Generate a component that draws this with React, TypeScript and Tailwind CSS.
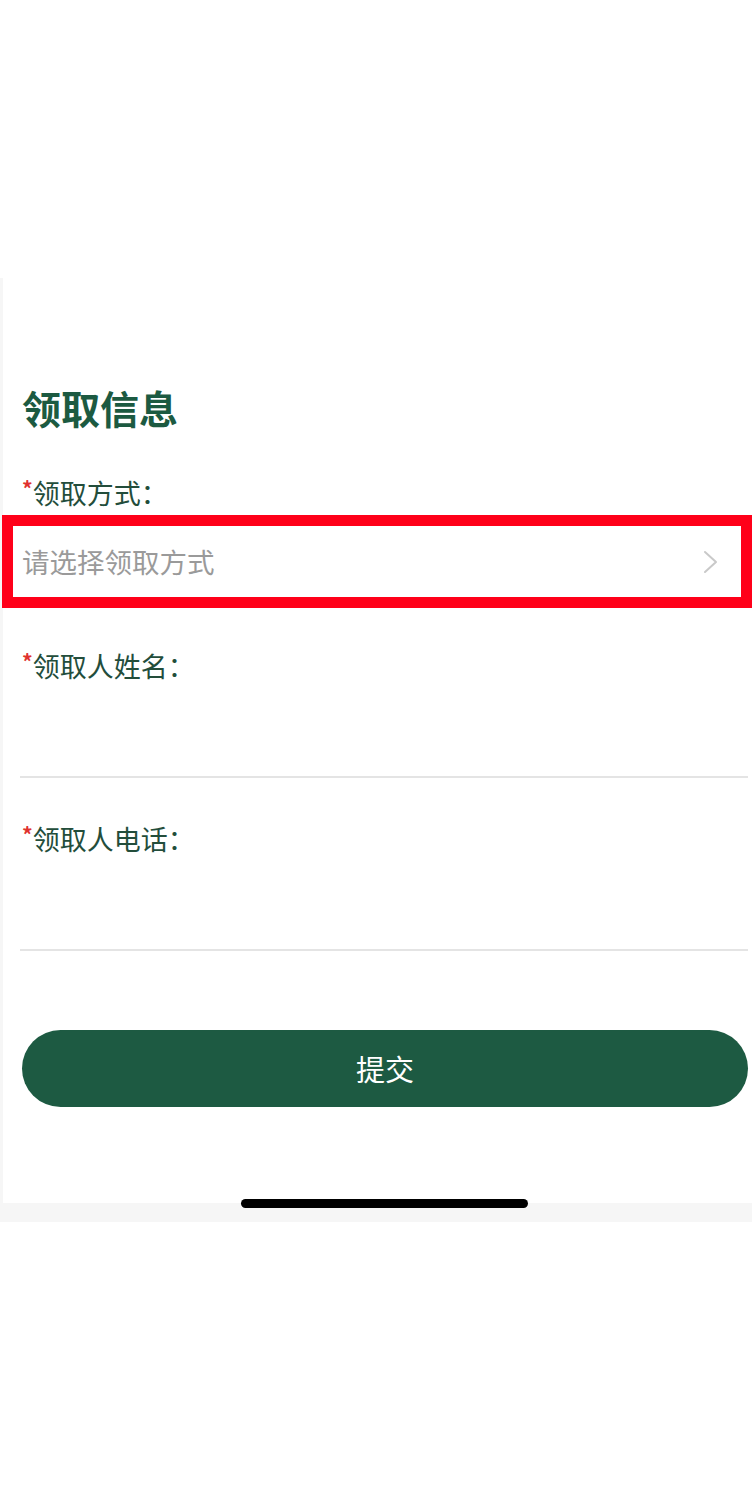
import React from "react";

const font = { fontFamily: '"Noto Sans CJK SC", "Noto Sans", sans-serif' };

function Label({ text }: { text: string }) {
  return (
    <div className="h-[40px] flex items-center pl-[22px] text-[27px] leading-none text-[#234d3b]">
      <span className="text-[#e0322f] text-[21px] font-bold self-start mt-[6px]">*</span>
      <span>{text}</span>
    </div>
  );
}

export default function App() {
  return (
    <div className="relative w-[752px] min-h-[1504px] bg-white" style={font}>
      <div className="h-[278px]" />
      <div className="h-[925px] flex flex-col border-l-[3px] border-[#f6f6f6] bg-white">
        <div className="h-[60px] mt-[99px] flex items-center pl-[19px] text-[39px] font-bold leading-none text-[#1c5a41]">
          领取信息
        </div>
        <div className="mt-[35px] -ml-[3px]">
          <Label text="领取方式：" />
        </div>
        <div className="mt-[3px] -ml-[1px] h-[93px] border-[11px] border-[#ff0019] flex items-center justify-between pl-[9px] pr-[22px]">
          <span className="text-[27.5px] leading-none text-[#9a9a9a]">请选择领取方式</span>
          <svg width="16" height="24" viewBox="0 0 16 24" fill="none">
            <path d="M2 2 L13 12 L2 22" stroke="#c9c9c9" strokeWidth="2" strokeLinecap="round" strokeLinejoin="round" />
          </svg>
        </div>
        <div className="mt-[37px] -ml-[3px]">
          <Label text="领取人姓名：" />
        </div>
        <div className="h-[93px] ml-[17px] mr-[4px] border-b-2 border-[#e4e4e4]" />
        <div className="mt-[40px] -ml-[3px]">
          <Label text="领取人电话：" />
        </div>
        <div className="h-[93px] ml-[17px] mr-[4px] border-b-2 border-[#e4e4e4]" />
        <button className="mt-[79px] ml-[19px] mr-[4px] h-[77px] rounded-full bg-[#1d5a42] text-white text-[29px] leading-none flex items-center justify-center">
          提交
        </button>
      </div>
      <div className="h-[19px] bg-[#f6f6f6]" />
      <div className="absolute left-[241px] top-[1199px] w-[287px] h-[9px] rounded-full bg-black" />
    </div>
  );
}
